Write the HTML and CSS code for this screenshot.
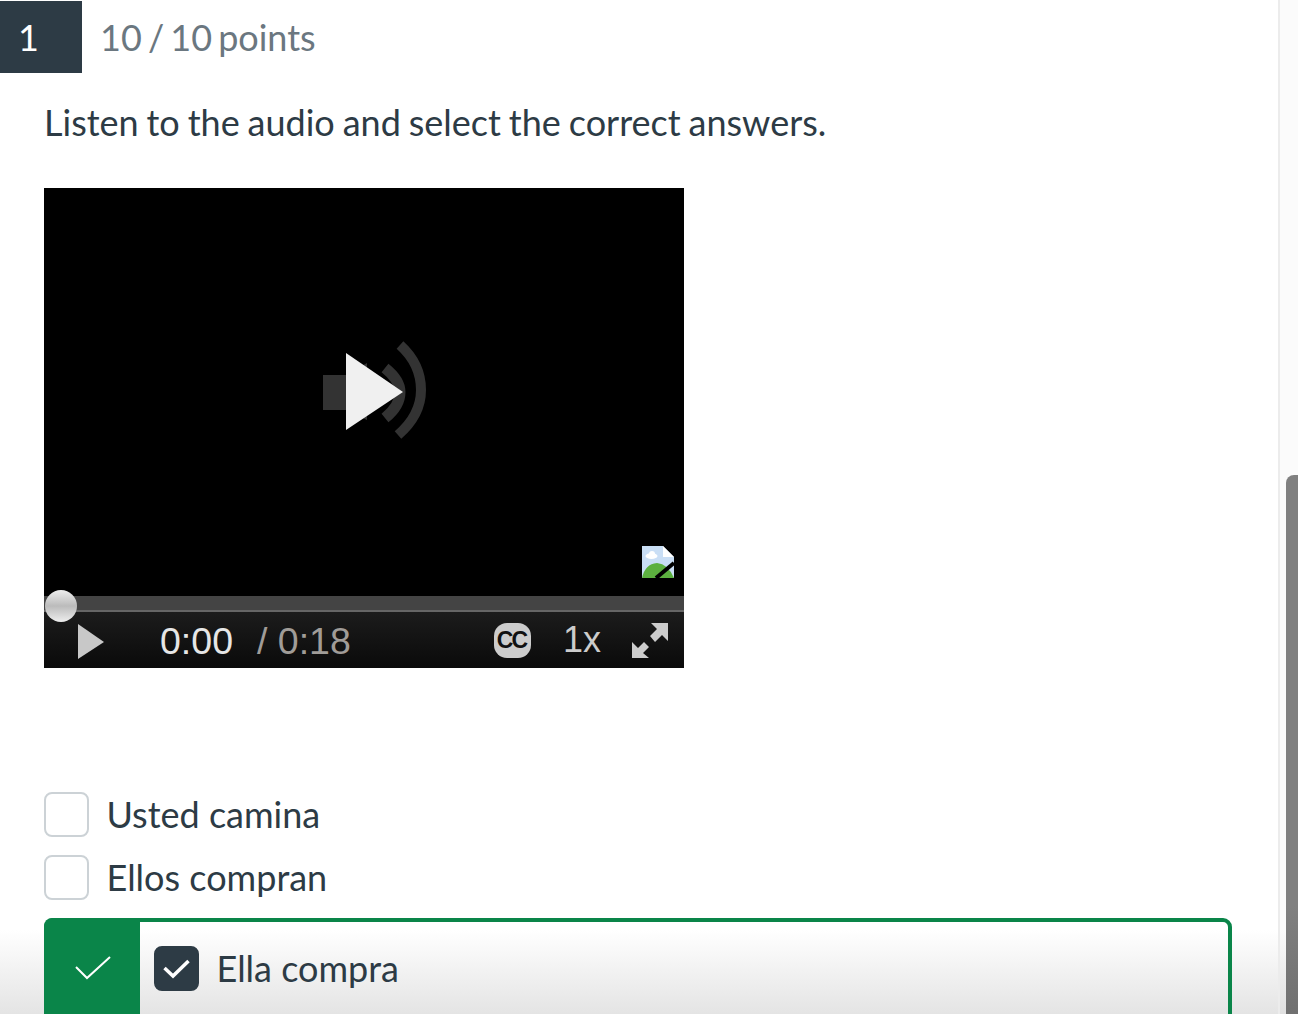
FILE: index.html
```html
<!DOCTYPE html>
<html lang="en">
<head>
<meta charset="utf-8">
<title>Question 1</title>
<link rel="stylesheet" href="styles.css">
</head>
<body>
<div class="page">
	<div class="main">
		<div class="head">
			<div class="num">1</div>
			<div class="points">10 / 10 points</div>
		</div>
		<p class="prompt">Listen to the audio and select the correct answers.</p>

		<div class="player">
			<div class="stage">
				<svg class="bigicon" width="110" height="100" viewBox="0 0 110 100">
					<g class="soft">
						<polygon points="3,35 26,35 47,23 47,80 26,70 3,70" fill="#333"/>
						<path d="M65 28 Q80 40 80 52 Q80 66 65 78" fill="none" stroke="#333" stroke-width="11"/>
						<path d="M80 5 Q101 24 101 50 Q101 75 78 95" fill="none" stroke="#333" stroke-width="10"/>
					</g>
					<polygon points="26,13 26,90 83,52" fill="#f0f0f0"/>
				</svg>
				<svg class="broken" width="32" height="32" viewBox="0 0 32 32">
					<polygon points="0,0 21,0 32,11 32,32 0,32" fill="#c9def5"/>
					<polygon points="21,0 32,11 21,11" fill="#fff"/>
					<ellipse cx="9.5" cy="10" rx="6" ry="3" fill="#fff"/>
					<circle cx="10" cy="8" r="3" fill="#fff"/>
					<path d="M0 32 Q3 18 15 17 Q26 18 32 32 Z" fill="#5cb03f"/>
					<line x1="32" y1="17" x2="14" y2="32" stroke="#000" stroke-width="4"/>
				</svg>
			</div>
			<div class="track"><span class="knob"></span></div>
			<div class="controls">
				<svg class="playbtn" width="26" height="35" viewBox="0 0 26 35"><polygon points="0,0 0,35 26,18" fill="#c8c8c8"/></svg>
				<span class="cur">0:00</span>
				<span class="dur">/ 0:18</span>
				<span class="cc">CC</span>
				<span class="speed">1x</span>
				<svg class="full" width="40" height="40" viewBox="0 0 40 40">
					<polygon points="38,3 21,3 27,9 20,16 25,22 32,15 38,21" fill="#ccc"/>
					<polygon points="2,38 2,22 8,28 14,22 19,27 13,33 19,38" fill="#ccc"/>
				</svg>
			</div>
		</div>

		<div class="options">
			<label class="opt"><span class="box"></span><span class="label">Usted camina</span></label>
			<label class="opt"><span class="box"></span><span class="label">Ellos compran</span></label>
			<div class="right">
				<div class="flag">
					<svg width="36" height="24" viewBox="0 0 36 24"><path d="M1 11 L12 22 L35 1" fill="none" stroke="#fff" stroke-width="2"/></svg>
				</div>
				<label class="opt inner">
					<span class="box on">
						<svg width="27" height="20" viewBox="0 0 27 20"><path d="M1.5 9 L10 17 L25.5 2" fill="none" stroke="#fff" stroke-width="3.5"/></svg>
					</span><span class="label">Ella compra</span>
				</label>
			</div>
		</div>
	</div>
	<div class="scroll"><div class="thumb"></div></div>
</div>
</body>
</html>
```

FILE: styles.css
```css
*{margin:0;padding:0;box-sizing:border-box;}
html,body{height:100%;overflow:hidden;}
body{font-family:"Lato","Liberation Sans",sans-serif;color:#2d3b45;background:#fff;}
.page{display:flex;height:1014px;background:linear-gradient(to bottom,rgba(228,228,228,0),#e4e4e4) left bottom/100% 84px no-repeat;}
.main{flex:1;min-width:0;overflow:hidden;padding-top:1px;}

.head{display:flex;align-items:center;gap:18px;height:72px;}
.num{width:82px;height:72px;background:#2d3b45;color:#fff;font-size:36px;line-height:72px;padding-left:18px;}
.points{font-size:36px;color:#6b7780;word-spacing:-3.1px;}
.prompt{font-size:36px;line-height:44px;margin:27px 0 0 44px;word-spacing:-1.3px;}

.player{width:640px;height:480px;margin:44px 0 0 44px;background:#000;display:flex;flex-direction:column;font-family:"Liberation Sans",Arial,sans-serif;}
.stage{height:408px;position:relative;}
.bigicon{position:absolute;left:276px;top:152px;}
.soft{filter:blur(.6px);}
.broken{position:absolute;left:598px;top:358px;}
.track{height:16px;background:#444;border-bottom:2px solid #666;position:relative;}
.knob{position:absolute;left:1px;top:-6px;width:32px;height:32px;border-radius:50%;background:linear-gradient(to bottom,#eee,#bbb 50%,#eee);}
.controls{flex:1;display:flex;align-items:center;padding:0 14px 0 34px;background:linear-gradient(to bottom,#1c1c1c,#0a0a0a);}
.playbtn{margin-top:2px;}
.cur,.dur{font-size:37.5px;position:relative;top:1px;}
.cur{color:#e6e6e6;margin-left:56px;}
.dur{color:#a09c98;margin-left:24px;}
.cc{width:37px;height:35px;border-radius:13px;background:#ccc;color:#111;font-size:23px;font-weight:bold;letter-spacing:-2px;text-align:center;line-height:35px;padding-right:2px;margin-left:auto;}
.speed{font-size:36px;color:#ccc;margin-left:32px;}
.full{margin-left:29px;}

.options{margin:124px 0 0 44px;display:flex;flex-direction:column;gap:18px;}
.opt{display:flex;align-items:center;gap:18px;font-size:36px;height:45px;}
.label{margin:-2px 0 0 -.5px;}
.box{width:45px;height:45px;border:2px solid #ccd2d6;border-radius:8px;background:#fff;flex:none;display:flex;align-items:center;justify-content:center;}
.box.on{background:#2d3b45;border-color:#2d3b45;}
.right{width:1188px;height:120px;display:flex;border:4px solid #0a8549;border-radius:9px;}
.flag{width:96px;margin:-4px 0 -4px -4px;background:#0a8549;border-radius:8px 0 0 8px;flex:none;display:flex;justify-content:center;padding:38px 0 0 2px;}
.flag svg{display:block;}
.inner{margin:24px 0 0 14px;}

.scroll{width:20px;border-left:2px solid #ececec;background:rgba(0,0,0,.015);padding:475px 0 0 6px;display:flex;}
.thumb{flex:1;background:linear-gradient(to bottom,#808080 80%,#707070);border-top-left-radius:8px;}
```
